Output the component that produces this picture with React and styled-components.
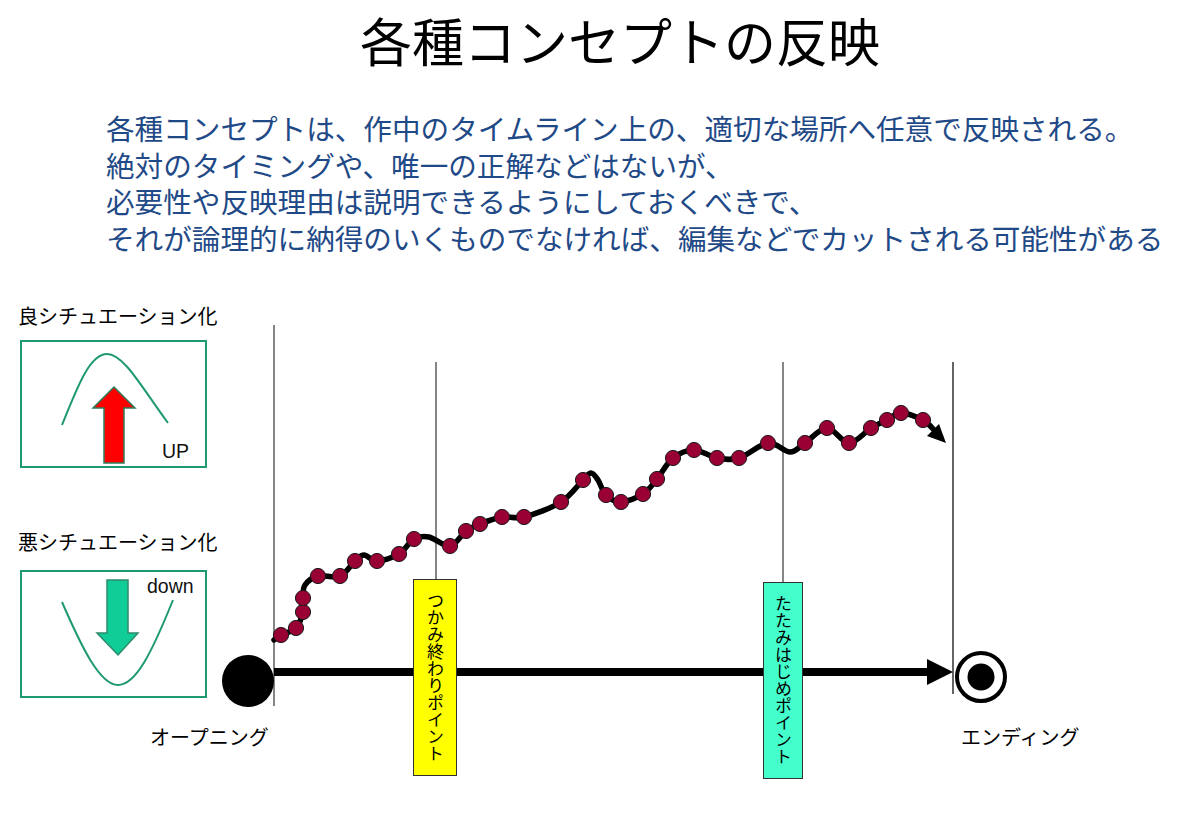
import React from 'react';
import styled, {createGlobalStyle} from 'styled-components';

const JP = `"Noto Sans CJK JP", "Noto Sans", sans-serif`;

const GlobalStyle = createGlobalStyle`
	body {
		margin: 0;
		background: #ffffff;
		font-family: ${JP};
		color: #000;
	}
`;

const leadLines = [
	'各種コンセプトは、作中のタイムライン上の、適切な場所へ任意で反映される。',
	'絶対のタイミングや、唯一の正解などはないが、',
	'必要性や反映理由は説明できるようにしておくべきで、',
	'それが論理的に納得のいくものでなければ、編集などでカットされる可能性がある',
];

// the story line, page coordinates; dots sit on the points marked true
const curve = [
	[274, 640, false], [281, 635, true], [296, 628, true], [303, 612, true], [303, 598, true],
	[305, 585, false], [318, 576, true], [340, 576, true], [355, 561, true], [364, 555, false],
	[377, 561, true], [399, 554, true], [414, 539, true], [429, 537, false], [450, 546, true],
	[466, 531, true], [480, 524, true], [502, 517, true], [524, 517, true], [561, 502, true],
	[583, 480, true], [591, 473, false], [598, 480, false], [606, 495, true], [621, 502, true],
	[643, 494, true], [657, 479, true], [673, 458, true], [694, 450, true], [717, 458, true],
	[739, 458, true], [768, 443, true], [790, 452, false], [805, 443, true], [827, 428, true],
	[849, 443, true], [871, 428, true], [887, 420, true], [901, 413, true], [923, 420, true],
	[936, 432, false],
];

const smoothPath = pts => {
	let d = `M${pts[0][0]} ${pts[0][1]}`;
	for (let i = 0; i < pts.length - 1; i++) {
		const p0 = pts[i - 1] || pts[i];
		const p1 = pts[i];
		const p2 = pts[i + 1];
		const p3 = pts[i + 2] || p2;
		const c1x = p1[0] + (p2[0] - p0[0]) / 6;
		const c1y = p1[1] + (p2[1] - p0[1]) / 6;
		const c2x = p2[0] - (p3[0] - p1[0]) / 6;
		const c2y = p2[1] - (p3[1] - p1[1]) / 6;
		d += ` C${c1x.toFixed(1)} ${c1y.toFixed(1)} ${c2x.toFixed(1)} ${c2y.toFixed(1)} ${p2[0]} ${p2[1]}`;
	}
	return d;
};

const Slide = styled.div`
	width: 1200px;
	height: 819px;
	overflow: hidden;
	position: relative;
`;

const Title = styled.h1`
	margin: 0;
	padding: 9px 0 0 40px;
	font-size: 52px;
	line-height: 62px;
	font-weight: 400;
	text-align: center;
`;

const Lead = styled.div`
	margin-top: 39px;
	padding-left: 106px;
	color: #1f4a87;
	font-size: 28.6px;
	white-space: nowrap;
`;

const LeadLine = styled.div`
	height: 36.7px;
	line-height: 36.7px;
`;

const Diagram = styled.div`
	margin-top: 33px;
	display: flex;
	height: 529px;
`;

const Legend = styled.div`
	width: 215px;
	flex: none;
	padding: 14px 0 0 18px;
	box-sizing: border-box;
	display: flex;
	flex-direction: column;
`;

const LegendLabel = styled.div`
	font-size: 20px;
	line-height: 24px;
	margin-top: ${p => p.$gap}px;
	white-space: nowrap;
`;

const LegendBox = styled.div`
	width: 187px;
	height: 128px;
	margin: ${p => p.$gap}px 0 0 2px;
	border: 2px solid #1e9a6e;
	box-sizing: border-box;
	svg {
		display: block;
	}
`;

const Canvas = styled.div`
	position: relative;
	flex: 1;
	svg {
		display: block;
	}
`;

const PointTag = styled.div`
	position: absolute;
	left: ${p => p.$x - 215}px;
	top: ${p => p.$y - 290}px;
	width: ${p => p.$w}px;
	height: 197px;
	box-sizing: border-box;
	background: ${p => p.$color};
	border: 1px solid #333;
	writing-mode: vertical-rl;
	text-orientation: upright;
	font-size: 17px;
	line-height: ${p => p.$w - 2}px;
	padding-top: 12px;
`;

const EndLabel = styled.div`
	position: absolute;
	left: ${p => p.$x - 215}px;
	top: 434px;
	font-size: 20px;
	line-height: 26px;
	white-space: nowrap;
`;

const Note = styled.text`
	font-family: "Liberation Sans", Arial, sans-serif;
	font-size: 19.5px;
	fill: #111;
`;

const UpBox = () => (
	<LegendBox $gap={12}>
		<svg width="183" height="124" viewBox="2 2 183 124">
			<path d="M42 85 C58 45 70 14 87 14 C104 14 122 48 148 83" fill="none" stroke="#1e9a6e" strokeWidth="2" />
			<path d="M84 123 L84 68 L73 68 L94 47 L115 68 L104 68 L104 123 Z" fill="#ff0000" stroke="#2e7d5b" strokeWidth="1.5" />
			<Note x="142" y="118">UP</Note>
		</svg>
	</LegendBox>
);

const DownBox = () => (
	<LegendBox $gap={16}>
		<svg width="183" height="124" viewBox="2 2 183 124">
			<path d="M42 32 C62 78 80 115 98 115 C116 115 132 82 153 30" fill="none" stroke="#1e9a6e" strokeWidth="2" />
			<path d="M87 10 L108 10 L108 63 L118 63 L98 85 L77 63 L87 63 Z" fill="#10cc96" stroke="#2e8b6b" strokeWidth="1.5" />
			<Note x="127" y="23">down</Note>
		</svg>
	</LegendBox>
);

const Timeline = () => (
	<svg width="985" height="529" viewBox="215 290 985 529">
		<g stroke="#444" strokeWidth="1.3">
			<line x1="274" y1="325" x2="274" y2="706" />
			<line x1="436" y1="362" x2="436" y2="580" />
			<line x1="783" y1="362" x2="783" y2="582" />
			<line x1="953" y1="362" x2="953" y2="694" stroke="#111" />
		</g>
		<line x1="274" y1="672" x2="932" y2="672" stroke="#000" strokeWidth="8" />
		<polygon points="927,659 953,672 927,685" fill="#000" />
		<circle cx="248" cy="681" r="26" fill="#000" />
		<circle cx="981" cy="677" r="24" fill="#fff" stroke="#000" strokeWidth="4" />
		<circle cx="981" cy="677" r="13.5" fill="#000" />
		<path d={smoothPath(curve)} fill="none" stroke="#000" strokeWidth="5.5" strokeLinejoin="round" strokeLinecap="round" />
		<polygon points="946,443 927,436 939,424" fill="#000" />
		{curve.filter(p => p[2]).map(([x, y]) => (
			<circle key={`${x}-${y}`} cx={x} cy={y} r="7.6" fill="#990033" stroke="#1a1a1a" strokeWidth="1" />
		))}
	</svg>
);

const App = () => (
	<Slide>
		<GlobalStyle />
		<Title>各種コンセプトの反映</Title>
		<Lead>
			{leadLines.map(line => <LeadLine key={line}>{line}</LeadLine>)}
		</Lead>
		<Diagram>
			<Legend>
				<LegendLabel $gap={0}>良シチュエーション化</LegendLabel>
				<UpBox />
				<LegendLabel $gap={62}>悪シチュエーション化</LegendLabel>
				<DownBox />
			</Legend>
			<Canvas>
				<Timeline />
				<PointTag $x={413} $y={579} $w={44} $color="#ffff00">つかみ終わりポイント</PointTag>
				<PointTag $x={763} $y={582} $w={40} $color="#44ffcc">たたみはじめポイント</PointTag>
				<EndLabel $x={150}>オープニング</EndLabel>
				<EndLabel $x={961}>エンディング</EndLabel>
			</Canvas>
		</Diagram>
	</Slide>
);

export default App;
